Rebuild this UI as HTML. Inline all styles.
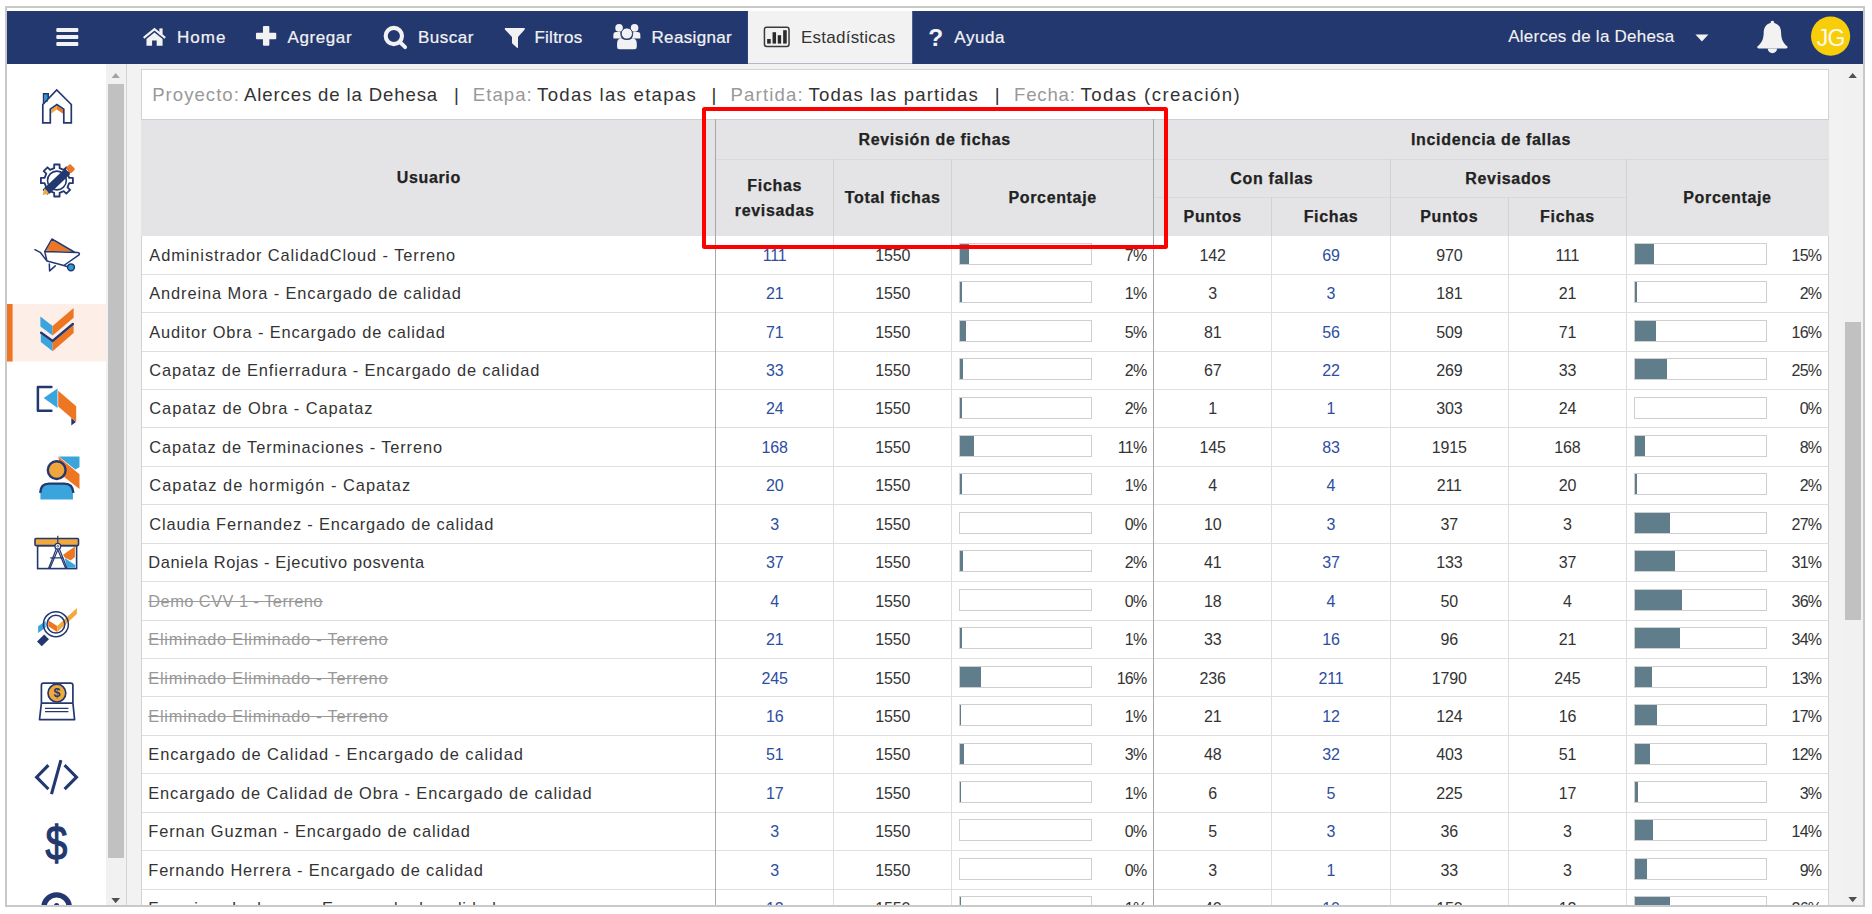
<!DOCTYPE html><html lang="es"><head><meta charset="utf-8"><title>Estadísticas</title><style>*{box-sizing:border-box;margin:0;padding:0}
html,body{width:1872px;height:914px;overflow:hidden;background:#fff}
body{position:relative;font-family:"Liberation Sans",sans-serif;color:#333;font-size:16px}
div,svg{position:absolute}
.frame{left:5px;top:6px;width:1860px;height:901px;border:2px solid #c9c9c9;background:#fff;z-index:0}
.frame2{left:5px;top:6px;width:1860px;height:901px;border:2px solid #c9c9c9;z-index:50;pointer-events:none}
.white-b{left:0;top:907px;width:1872px;height:7px;background:#fff;z-index:49}
.nav{left:7px;top:11px;width:1856px;height:52.7px;background:#243870;z-index:5;color:#fff}
.nav .it{top:0;height:52.7px;line-height:53.6px;font-size:17px;white-space:nowrap;color:#f2f2f2;-webkit-text-stroke:.22px #f2f2f2}
.nav svg{overflow:visible}
.side{left:7px;top:63.7px;width:99px;height:842px;background:#fff;z-index:3;overflow:hidden}


.sbL{left:106px;top:63.7px;width:20px;height:842px;background:#f1f1f1;z-index:3}
.sbL .thumb{left:2px;top:20.5px;width:16px;height:773.5px;background:#c1c1c1}
.sbL svg,.sbR svg{width:9.4px;height:5.2px}
.sline{left:126px;top:63.7px;width:1.2px;height:842px;background:#d4d4d4;z-index:3}
.main{left:0;top:0;width:1872px;height:906px;z-index:2;overflow:hidden}
.main:before{content:"";position:absolute;left:127px;top:63.7px;width:1736px;height:842px;background:#f2f2f2}
.panel{left:141.4px;top:68.6px;width:1687.5px;height:850px;background:#fff;border:1.2px solid #d3d3d3}
.filt{left:152px;top:80.5px;height:28px;width:1200px;line-height:28px;font-size:18.6px;white-space:nowrap;color:#333}
.filt span{position:absolute;top:0;white-space:nowrap}
.filt .g{color:#999}
.thead{left:141.4px;top:119.3px;width:1687.5px;height:116.4px;background:#e4e4e6}
.hl{height:1px;background:#d9d9db}
.vl{width:1px;background:#d2d2d4}
.rl{height:1px;background:#dfdfdf}
.bvl{width:1px;background:#dedede}
.dvl{width:1.2px;background:#a8a8a8}
.th{padding-top:2.4px;-webkit-text-stroke:.25px #222;display:flex;align-items:center;justify-content:center;text-align:center;font-weight:700;font-size:16px;line-height:24.4px;color:#222;letter-spacing:.66px}
.row{left:0;width:1872px;height:38.44px}
.c{top:0;height:38.44px;line-height:38.8px;white-space:nowrap;font-size:16.4px;color:#333}
.name{letter-spacing:.91px;font-size:16.4px}
.del{color:#999;text-decoration:line-through}
.ctr{text-align:center;letter-spacing:-.15px;font-size:16px;line-height:39.3px}
.pct{text-align:right;letter-spacing:-.7px;font-size:16px;line-height:39.3px}
.lk{color:#2e4da0}
.bar{width:133.1px;height:22px;border:1.1px solid #cfcfcf;background:#fff}
.bar i{position:absolute;left:0;top:0;height:100%;background:#607d8b}
.red{left:701.6px;top:107.4px;width:466px;height:141.6px;border:4px solid #fe0000;border-radius:2.5px;z-index:20}
.sbR{left:1843px;top:63.7px;width:20px;height:842px;z-index:3;background:#f1f1f1}
.sbR .thumb{left:2px;top:258.3px;width:16px;height:298.2px;background:#c1c1c1}
.sbR .up{left:5.3px;top:8.9px}
.sbR .dn{left:5.2px;top:833.1px}
.sbL .up{left:5.2px;top:8.9px}
.sbL .dn{left:5.2px;top:834.3px}
.nav .q{left:921.2px;top:0;height:52.7px;line-height:53.8px;font-size:24.5px;font-weight:700;color:#f2f2f2}
.nav .av{left:1804.2px;top:5.6px;width:39.2px;height:39.2px;line-height:43.8px;text-align:center;color:#fff;font-size:23px;letter-spacing:-.6px;opacity:.93}
.fl{left:141.4px;top:119px;width:1687.5px;height:1px;background:#cfcfcf}
</style></head><body>
<div class="frame"></div>
<div class="nav">
<svg style="left:0;top:0;width:1856px;height:52.7px" viewBox="7 11 1856 52.7">
<g fill="#f2f2f2">
<rect x="56.1" y="28" width="22" height="4" rx="1"/><rect x="56.1" y="35" width="22" height="4" rx="1"/><rect x="56.1" y="42" width="22" height="4" rx="1"/>
<!-- home -->
<path d="M143.5 37.9L154.3 29.2L165 37.9" fill="none" stroke="#f2f2f2" stroke-width="2.1" stroke-linejoin="miter"/>
<path d="M146.3 38.9L154.3 32.4L162.4 38.9V45.8H156.5V40.6H151.9V45.8H146.3Z"/>
<rect x="159.2" y="28.4" width="3.2" height="6"/>
<!-- plus -->
<rect x="255.8" y="32.8" width="20.3" height="6.4" rx="1"/><rect x="262.8" y="26.1" width="6.4" height="19.7" rx="1"/>
<!-- search -->
<circle cx="393.7" cy="36" r="8.15" fill="none" stroke="#f2f2f2" stroke-width="4.1"/>
<path d="M400.2 42.5L405 47.1" fill="none" stroke="#f2f2f2" stroke-width="3.9" stroke-linecap="round"/>
<!-- filter -->
<path d="M505.2 28.1H524.2Q525.2 28.6 524.4 29.8L517.9 36.9V47.4Q517.5 48.4 516.6 47.6L512.2 43.6Q511.9 43.3 511.9 42.8V36.9L505 29.8Q504.2 28.6 505.2 28.1Z"/>
<!-- users -->
<circle cx="619" cy="27.9" r="3.8"/><circle cx="634.5" cy="27.9" r="3.8"/>
<path d="M613.3 38.6V35.2Q613.3 32 616 32H620.2Q620 35.8 621.8 38.6Z"/>
<path d="M640.3 38.6V35.2Q640.3 32 637.6 32H633.2Q633.4 35.8 631.6 38.6Z"/>
<circle cx="626.8" cy="33.5" r="5.6" stroke="#243870" stroke-width="0.9"/>
<path d="M617 47V43.5Q617 38.4 621.2 38.2Q626.8 42 632.4 38.2Q636.7 38.4 636.7 43.5V47Q636.7 49.2 634.4 49.2H619.3Q617 49.2 617 47Z"/>
</g>
<!-- chart -->
<rect x="747.9" y="11" width="164.3" height="52.7" fill="#f2f2f2"/>
<rect x="764.4" y="27.2" width="24.6" height="19.2" rx="2.2" fill="none" stroke="#3a3a3a" stroke-width="1.5"/>
<g fill="#2a2a2a"><rect x="767.1" y="39" width="3.6" height="4.6"/><rect x="772.5" y="32.2" width="3.5" height="11.4"/><rect x="777.7" y="35.2" width="3.4" height="8.4"/><rect x="783.1" y="30.2" width="3.6" height="13.4"/></g>
<!-- caret -->
<path d="M1695.6 34.4H1708.6L1702.1 41.4Z" fill="#f2f2f2"/>
<!-- bell -->
<path d="M1772.6 20.7C1773.8 20.7 1774.5 21.6 1774.4 22.9C1779.2 24 1781.2 27.6 1781.3 32.6C1781.4 39.5 1783.3 43 1787.6 46.6C1788 47.6 1787.6 48.5 1786.4 48.5H1758.8C1757.6 48.5 1757.2 47.6 1757.6 46.6C1761.9 43 1763.8 39.5 1763.9 32.6C1764 27.6 1766 24 1770.8 22.9C1770.7 21.6 1771.4 20.7 1772.6 20.7Z" fill="#f2f2f2"/>
<path d="M1767.9 48.4A4.7 4.8 0 0 0 1777.3 48.4Z" fill="#f2f2f2"/>
<circle cx="1830.8" cy="36.2" r="19.6" fill="#f8cd0a"/>
</svg>
<div class="it" style="left:170px;letter-spacing:1px">Home</div>
<div class="it" style="left:280.6px;letter-spacing:.58px">Agregar</div>
<div class="it" style="left:410.9px;letter-spacing:.5px">Buscar</div>
<div class="it" style="left:527.5px;letter-spacing:.23px">Filtros</div>
<div class="it" style="left:644.5px;letter-spacing:.34px">Reasignar</div>
<div class="it" style="left:794px;color:#333;letter-spacing:.24px;-webkit-text-stroke:0">Estadísticas</div>
<div class="it" style="left:947.3px;letter-spacing:.55px">Ayuda</div>
<div class="it" style="left:1501.3px;top:-1px;letter-spacing:.23px;-webkit-text-stroke:.1px #f2f2f2">Alerces de la Dehesa</div>
<div class="q">?</div>
<div class="av">JG</div>
</div>

<div class="side"><svg class="icons" style="left:0;top:0;width:99px;height:842.3px" viewBox="7 63.7 99 842.3">
<rect x="7" y="303.7" width="99" height="57.5" fill="#fdefe7"/><rect x="7" y="303.7" width="5.6" height="57.5" fill="#ee7623"/>
<rect x="44.3" y="93.6" width="3.6" height="8" fill="#2e9bd6"/>
<path d="M51.2 109.2L56.9 105.3V109.2L51.2 113.2Z" fill="#f2a93b"/><path d="M56.9 105.3L63.1 109.2V113.4L56.9 109.2Z" fill="#ee7623"/>
<path d="M43.6 103.4V93.4H48.2V98.6" fill="none" stroke="#243870" stroke-width="1.6"/>
<path d="M42.8 122.6V104.2L56.7 89.7L71.3 104.2V122.6H63.8V108.8L56.9 104.3L50.3 108.8V122.6Z" fill="none" stroke="#243870" stroke-width="1.7" stroke-linejoin="miter"/>
<path d="M54.2 167.9 L54.2 164.2 L59.6 164.2 L59.6 167.9 L63.7 169.6 L66.3 167.0 L70.1 170.8 L67.5 173.4 L69.2 177.5 L72.9 177.5 L72.9 182.9 L69.2 182.9 L67.5 187.0 L70.1 189.6 L66.3 193.4 L63.7 190.8 L59.6 192.5 L59.6 196.2 L54.2 196.2 L54.2 192.5 L50.1 190.8 L47.5 193.4 L43.7 189.6 L46.3 187.0 L44.6 182.9 L40.9 182.9 L40.9 177.5 L44.6 177.5 L46.3 173.4 L43.7 170.8 L47.5 167.0 L50.1 169.6Z" fill="#fff" stroke="#243870" stroke-width="1.8" stroke-linejoin="round"/>
<circle cx="56.9" cy="180.2" r="9.4" fill="#fff" stroke="#243870" stroke-width="1.6"/>
<g transform="translate(42.6 194.7) rotate(-43.4)"><path d="M0 0L6 -3.7V3.7Z" fill="#f2a93b"/><rect x="6" y="-3.8" width="28.6" height="7.6" fill="#243870"/><rect x="35.3" y="-3.8" width="6.2" height="7.6" rx="1.6" fill="#ee7623"/></g>
<path d="M45.9 250.4L52 239.6L72.6 251.4Z" fill="#ee7623"/>
<path d="M34.9 249.4L40.2 252L47 260.8L63.8 265.2L79 254.6Q80.2 252.6 77.8 252.3L44.7 251.3L47 260.8M44.7 251.3L51.9 238.7L75 252.2M63.8 265.2L67.5 266.4M49.3 263.6L49.6 270.6L55.3 265.6" fill="none" stroke="#243870" stroke-width="1.5" stroke-linejoin="round" stroke-linecap="round"/>
<circle cx="71" cy="267" r="3.4" fill="#2e9bd6" stroke="#243870" stroke-width="1.5"/>
<path d="M40.4 316.1L52.6 325.6V335.1L40.4 326.3Z" fill="#3aa5dd"/><path d="M52.6 325.6L73.6 307.6V317.4L52.6 335.1Z" fill="#ee7623"/>
<path d="M40.8 333.8L52.6 342V350.9L40.8 341.7Z" fill="#3aa5dd"/><path d="M52.6 342L73.6 325V332.8L52.6 350.9Z" fill="#ee7623"/>
<path d="M41.1 332.4L52.6 340.6L72.9 323.7" fill="none" stroke="#243870" stroke-width="2.4" stroke-linecap="round"/>
<path d="M51.4 386.8H37.9V410.5H51.4" fill="none" stroke="#243870" stroke-width="2.5" stroke-linecap="round" stroke-linejoin="round"/>
<path d="M43.7 397.7L57.5 388.1V407.8Z" fill="#3aa5dd"/><path d="M58.2 390.4L76.2 405.9V421.6L58.2 406.2Z" fill="#ee7623"/><path d="M71.3 417.6L75.9 421.6L71.3 425.3Z" fill="#243870"/>
<path d="M58.8 456.2H79.5V467L75.2 469.3Z" fill="#3aa5dd"/><path d="M58.2 456.2L79.5 473.9V488.7L62 475Z" fill="#ee7623"/>
<circle cx="56.7" cy="469.8" r="8.9" fill="#f0a63c" stroke="#243870" stroke-width="2.4"/>
<path d="M40.4 499.2V491Q41 483.2 49 483.2H64.4Q72.4 483.2 72.9 491V499.2Z" fill="#3aa5dd"/>
<path d="M40.2 492.6Q40.6 483.3 49 483.3H64.4Q72.8 483.3 73.4 492.6" fill="none" stroke="#243870" stroke-width="2.4"/>
<rect x="37.6" y="545.3" width="39" height="23" fill="#fff" stroke="#243870" stroke-width="1.6"/>
<path d="M63.1 554.5L74.9 546.3V556.8L70.6 560.1L64.7 557.1Z" fill="#ee7623"/><path d="M64.7 557.8L75.2 564.7V567.4H67Z" fill="#3aa5dd"/>
<rect x="35" y="538.2" width="43.5" height="7.1" rx="1" fill="#f2a93b" stroke="#243870" stroke-width="1.6"/>
<path d="M57.8 535.5V543M56.4 548.2L48.6 568M50 568L57.8 549.5L65.6 568M67 568L59.2 548.2M50.3 557.5H63.6" fill="none" stroke="#243870" stroke-width="1.2"/>
<circle cx="57.8" cy="546" r="2.9" fill="#fff" stroke="#243870" stroke-width="1.3"/><circle cx="57.8" cy="546" r="0.9" fill="none" stroke="#243870" stroke-width=".7"/>
<path d="M38.1 625.9L45.7 620.6V627.2L38.1 632.8Z" fill="#3aa5dd"/>
<path d="M48.3 620L57.2 625.6V631.8L48.3 625.9Z" fill="#ee7623"/><path d="M57.2 625.6L76.9 607.8V613.7L57.2 631.8Z" fill="#f2a93b"/>
<circle cx="55.9" cy="623.9" r="12.5" fill="none" stroke="#243870" stroke-width="1.5"/><circle cx="55.9" cy="623.9" r="8.9" fill="none" stroke="#243870" stroke-width="1.5"/>
<path d="M46.6 636.6L39.4 643.6" stroke="#243870" stroke-width="6.8" fill="none" stroke-linecap="butt"/>
<path d="M41.4 702.9V685Q41.4 682.8 43.6 682.8H70.7Q72.9 682.8 72.9 685V702.9L74.6 719.3H39.5L41.4 702.9H72.9" fill="#fff" stroke="#243870" stroke-width="1.7" stroke-linejoin="round"/>
<circle cx="56.9" cy="692.8" r="8.9" fill="#f2a93b" stroke="#243870" stroke-width="1.7"/>
<path d="M45 708.1H68.4M45 711.4H68.4" stroke="#243870" stroke-width="1.3"/>
<text x="56.9" y="697.2" text-anchor="middle" font-family="Liberation Sans, sans-serif" font-size="12.5" font-weight="700" fill="#243870">$</text>
<path d="M47.3 766L36.6 776.9L47.3 787.7M60.5 761.4L51.9 792.3M65.7 766L76.5 776.9L65.7 787.7" fill="none" stroke="#243870" stroke-width="3.1" stroke-linecap="square" stroke-linejoin="miter"/>
<text x="56.4" y="859.8" text-anchor="middle" font-family="Liberation Sans, sans-serif" font-size="47.8" font-weight="400" fill="#243870" stroke="#243870" stroke-width="1.3" transform="translate(56.4 0) scale(.82 1) translate(-56.4 0)">$</text>
<circle cx="56.6" cy="907.4" r="12.8" fill="none" stroke="#243870" stroke-width="5.4"/><circle cx="56.6" cy="905.3" r="2.6" fill="#243870"/>
</svg></div>
<div class="sbL"><div class="thumb"></div><svg class="up" viewBox="0 0 10 6"><path d="M0 6L5 0L10 6Z" fill="#a3a3a3"/></svg><svg class="dn" viewBox="0 0 10 6"><path d="M0 0L5 6L10 0Z" fill="#505050"/></svg></div>
<div class="sline"></div>

<div class="main">
<div class="panel"></div>
<div class="filt">
<span class="g" style="left:0.20px;letter-spacing:1.013px">Proyecto:</span>
<span class="d" style="left:92.10px;letter-spacing:0.858px">Alerces de la Dehesa</span>
<span class="d" style="left:302.00px;letter-spacing:0px">|</span>
<span class="g" style="left:320.80px;letter-spacing:1.04px">Etapa:</span>
<span class="d" style="left:385.10px;letter-spacing:1.273px">Todas las etapas</span>
<span class="d" style="left:559.60px;letter-spacing:0px">|</span>
<span class="g" style="left:578.50px;letter-spacing:1.157px">Partida:</span>
<span class="d" style="left:656.50px;letter-spacing:1.147px">Todas las partidas</span>
<span class="d" style="left:842.80px;letter-spacing:0px">|</span>
<span class="g" style="left:862.00px;letter-spacing:0.82px">Fecha:</span>
<span class="d" style="left:928.60px;letter-spacing:1.447px">Todas (creación)</span>
</div>
<div class="thead"></div><div class="fl"></div>
<div class="hl" style="left:715.7px;top:158.7px;width:1112.7px"></div>
<div class="hl" style="left:1153.6px;top:196.7px;width:472.9px"></div>
<div class="vl" style="left:833.2px;top:159.2px;height:76.5px"></div>
<div class="vl" style="left:951.2px;top:159.2px;height:76.5px"></div>
<div class="vl" style="left:1271.3px;top:197.2px;height:38.5px"></div>
<div class="vl" style="left:1389.7px;top:159.2px;height:76.5px"></div>
<div class="vl" style="left:1507.9px;top:197.2px;height:38.5px"></div>
<div class="vl" style="left:1626.0px;top:159.2px;height:76.5px"></div>
<div class="th" style="left:141.9px;width:573.8px;top:119.3px;height:116.4px;"><span>Usuario</span></div>
<div class="th" style="left:715.7px;width:437.9px;top:119.3px;height:39.9px;"><span>Revisión de fichas</span></div>
<div class="th" style="left:1153.6px;width:674.8px;top:119.3px;height:39.9px;"><span>Incidencia de fallas</span></div>
<div class="th" style="left:715.7px;width:118.0px;top:159.2px;height:76.5px;"><span>Fichas<br>revisadas</span></div>
<div class="th" style="left:833.7px;width:118.0px;top:159.2px;height:76.5px;"><span>Total fichas</span></div>
<div class="th" style="left:951.7px;width:201.9px;top:159.2px;height:76.5px;"><span>Porcentaje</span></div>
<div class="th" style="left:1153.6px;width:236.6px;top:159.2px;height:38.0px;"><span>Con fallas</span></div>
<div class="th" style="left:1390.2px;width:236.3px;top:159.2px;height:38.0px;"><span>Revisados</span></div>
<div class="th" style="left:1153.6px;width:118.2px;top:197.2px;height:38.5px;"><span>Puntos</span></div>
<div class="th" style="left:1271.8px;width:118.4px;top:197.2px;height:38.5px;"><span>Fichas</span></div>
<div class="th" style="left:1390.2px;width:118.2px;top:197.2px;height:38.5px;"><span>Puntos</span></div>
<div class="th" style="left:1508.4px;width:118.1px;top:197.2px;height:38.5px;"><span>Fichas</span></div>
<div class="th" style="left:1626.5px;width:201.9px;top:159.2px;height:76.5px;"><span>Porcentaje</span></div>
<div class="row" style="top:235.70px">
<div class="c name" style="left:149.3px;letter-spacing:0.914px">Administrador CalidadCloud - Terreno</div>
<div class="c ctr lk" style="left:715.7px;width:118.0px">111</div>
<div class="c ctr" style="left:833.7px;width:118.0px">1550</div>
<div class="c pct" style="left:951.7px;width:194.9px">7%</div>
<div class="c ctr" style="left:1153.6px;width:118.2px">142</div>
<div class="c ctr lk" style="left:1271.8px;width:118.4px">69</div>
<div class="c ctr" style="left:1390.2px;width:118.2px">970</div>
<div class="c ctr" style="left:1508.4px;width:118.1px">111</div>
<div class="c pct" style="left:1626.5px;width:194.9px">15%</div>
</div>
<div class="bar" style="left:958.9px;top:242.80px"><i style="width:9.4px"></i></div>
<div class="bar" style="left:1633.7px;top:242.80px"><i style="width:19.2px"></i></div>
<div class="row" style="top:274.14px">
<div class="c name" style="left:149.3px;letter-spacing:0.883px">Andreina Mora - Encargado de calidad</div>
<div class="c ctr lk" style="left:715.7px;width:118.0px">21</div>
<div class="c ctr" style="left:833.7px;width:118.0px">1550</div>
<div class="c pct" style="left:951.7px;width:194.9px">1%</div>
<div class="c ctr" style="left:1153.6px;width:118.2px">3</div>
<div class="c ctr lk" style="left:1271.8px;width:118.4px">3</div>
<div class="c ctr" style="left:1390.2px;width:118.2px">181</div>
<div class="c ctr" style="left:1508.4px;width:118.1px">21</div>
<div class="c pct" style="left:1626.5px;width:194.9px">2%</div>
</div>
<div class="bar" style="left:958.9px;top:281.24px"><i style="width:1.8px"></i></div>
<div class="bar" style="left:1633.7px;top:281.24px"><i style="width:2.2px"></i></div>
<div class="rl" style="left:141.9px;top:273.64px;width:1686.5px"></div>
<div class="row" style="top:312.58px">
<div class="c name" style="left:149.3px;letter-spacing:0.865px">Auditor Obra - Encargado de calidad</div>
<div class="c ctr lk" style="left:715.7px;width:118.0px">71</div>
<div class="c ctr" style="left:833.7px;width:118.0px">1550</div>
<div class="c pct" style="left:951.7px;width:194.9px">5%</div>
<div class="c ctr" style="left:1153.6px;width:118.2px">81</div>
<div class="c ctr lk" style="left:1271.8px;width:118.4px">56</div>
<div class="c ctr" style="left:1390.2px;width:118.2px">509</div>
<div class="c ctr" style="left:1508.4px;width:118.1px">71</div>
<div class="c pct" style="left:1626.5px;width:194.9px">16%</div>
</div>
<div class="bar" style="left:958.9px;top:319.68px"><i style="width:6.0px"></i></div>
<div class="bar" style="left:1633.7px;top:319.68px"><i style="width:20.9px"></i></div>
<div class="rl" style="left:141.9px;top:312.08px;width:1686.5px"></div>
<div class="row" style="top:351.02px">
<div class="c name" style="left:149.3px;letter-spacing:0.851px">Capataz de Enfierradura - Encargado de calidad</div>
<div class="c ctr lk" style="left:715.7px;width:118.0px">33</div>
<div class="c ctr" style="left:833.7px;width:118.0px">1550</div>
<div class="c pct" style="left:951.7px;width:194.9px">2%</div>
<div class="c ctr" style="left:1153.6px;width:118.2px">67</div>
<div class="c ctr lk" style="left:1271.8px;width:118.4px">22</div>
<div class="c ctr" style="left:1390.2px;width:118.2px">269</div>
<div class="c ctr" style="left:1508.4px;width:118.1px">33</div>
<div class="c pct" style="left:1626.5px;width:194.9px">25%</div>
</div>
<div class="bar" style="left:958.9px;top:358.12px"><i style="width:2.8px"></i></div>
<div class="bar" style="left:1633.7px;top:358.12px"><i style="width:32.7px"></i></div>
<div class="rl" style="left:141.9px;top:350.52px;width:1686.5px"></div>
<div class="row" style="top:389.46px">
<div class="c name" style="left:149.3px;letter-spacing:0.946px">Capataz de Obra - Capataz</div>
<div class="c ctr lk" style="left:715.7px;width:118.0px">24</div>
<div class="c ctr" style="left:833.7px;width:118.0px">1550</div>
<div class="c pct" style="left:951.7px;width:194.9px">2%</div>
<div class="c ctr" style="left:1153.6px;width:118.2px">1</div>
<div class="c ctr lk" style="left:1271.8px;width:118.4px">1</div>
<div class="c ctr" style="left:1390.2px;width:118.2px">303</div>
<div class="c ctr" style="left:1508.4px;width:118.1px">24</div>
<div class="c pct" style="left:1626.5px;width:194.9px">0%</div>
</div>
<div class="bar" style="left:958.9px;top:396.56px"><i style="width:2.0px"></i></div>
<div class="bar" style="left:1633.7px;top:396.56px"><i style="width:0.0px"></i></div>
<div class="rl" style="left:141.9px;top:388.96px;width:1686.5px"></div>
<div class="row" style="top:427.90px">
<div class="c name" style="left:149.3px;letter-spacing:0.882px">Capataz de Terminaciones - Terreno</div>
<div class="c ctr lk" style="left:715.7px;width:118.0px">168</div>
<div class="c ctr" style="left:833.7px;width:118.0px">1550</div>
<div class="c pct" style="left:951.7px;width:194.9px">11%</div>
<div class="c ctr" style="left:1153.6px;width:118.2px">145</div>
<div class="c ctr lk" style="left:1271.8px;width:118.4px">83</div>
<div class="c ctr" style="left:1390.2px;width:118.2px">1915</div>
<div class="c ctr" style="left:1508.4px;width:118.1px">168</div>
<div class="c pct" style="left:1626.5px;width:194.9px">8%</div>
</div>
<div class="bar" style="left:958.9px;top:435.00px"><i style="width:14.2px"></i></div>
<div class="bar" style="left:1633.7px;top:435.00px"><i style="width:9.9px"></i></div>
<div class="rl" style="left:141.9px;top:427.4px;width:1686.5px"></div>
<div class="row" style="top:466.34px">
<div class="c name" style="left:149.3px;letter-spacing:1.018px">Capataz de hormigón - Capataz</div>
<div class="c ctr lk" style="left:715.7px;width:118.0px">20</div>
<div class="c ctr" style="left:833.7px;width:118.0px">1550</div>
<div class="c pct" style="left:951.7px;width:194.9px">1%</div>
<div class="c ctr" style="left:1153.6px;width:118.2px">4</div>
<div class="c ctr lk" style="left:1271.8px;width:118.4px">4</div>
<div class="c ctr" style="left:1390.2px;width:118.2px">211</div>
<div class="c ctr" style="left:1508.4px;width:118.1px">20</div>
<div class="c pct" style="left:1626.5px;width:194.9px">2%</div>
</div>
<div class="bar" style="left:958.9px;top:473.44px"><i style="width:1.7px"></i></div>
<div class="bar" style="left:1633.7px;top:473.44px"><i style="width:2.5px"></i></div>
<div class="rl" style="left:141.9px;top:465.84px;width:1686.5px"></div>
<div class="row" style="top:504.78px">
<div class="c name" style="left:149.3px;letter-spacing:0.833px">Claudia Fernandez - Encargado de calidad</div>
<div class="c ctr lk" style="left:715.7px;width:118.0px">3</div>
<div class="c ctr" style="left:833.7px;width:118.0px">1550</div>
<div class="c pct" style="left:951.7px;width:194.9px">0%</div>
<div class="c ctr" style="left:1153.6px;width:118.2px">10</div>
<div class="c ctr lk" style="left:1271.8px;width:118.4px">3</div>
<div class="c ctr" style="left:1390.2px;width:118.2px">37</div>
<div class="c ctr" style="left:1508.4px;width:118.1px">3</div>
<div class="c pct" style="left:1626.5px;width:194.9px">27%</div>
</div>
<div class="bar" style="left:958.9px;top:511.88px"><i style="width:0.0px"></i></div>
<div class="bar" style="left:1633.7px;top:511.88px"><i style="width:35.4px"></i></div>
<div class="rl" style="left:141.9px;top:504.28px;width:1686.5px"></div>
<div class="row" style="top:543.22px">
<div class="c name" style="left:148.3px;letter-spacing:0.652px">Daniela Rojas - Ejecutivo posventa</div>
<div class="c ctr lk" style="left:715.7px;width:118.0px">37</div>
<div class="c ctr" style="left:833.7px;width:118.0px">1550</div>
<div class="c pct" style="left:951.7px;width:194.9px">2%</div>
<div class="c ctr" style="left:1153.6px;width:118.2px">41</div>
<div class="c ctr lk" style="left:1271.8px;width:118.4px">37</div>
<div class="c ctr" style="left:1390.2px;width:118.2px">133</div>
<div class="c ctr" style="left:1508.4px;width:118.1px">37</div>
<div class="c pct" style="left:1626.5px;width:194.9px">31%</div>
</div>
<div class="bar" style="left:958.9px;top:550.32px"><i style="width:3.1px"></i></div>
<div class="bar" style="left:1633.7px;top:550.32px"><i style="width:40.4px"></i></div>
<div class="rl" style="left:141.9px;top:542.72px;width:1686.5px"></div>
<div class="row" style="top:581.66px">
<div class="c name del" style="left:148.3px;letter-spacing:0.458px">Demo CVV 1 - Terreno</div>
<div class="c ctr lk" style="left:715.7px;width:118.0px">4</div>
<div class="c ctr" style="left:833.7px;width:118.0px">1550</div>
<div class="c pct" style="left:951.7px;width:194.9px">0%</div>
<div class="c ctr" style="left:1153.6px;width:118.2px">18</div>
<div class="c ctr lk" style="left:1271.8px;width:118.4px">4</div>
<div class="c ctr" style="left:1390.2px;width:118.2px">50</div>
<div class="c ctr" style="left:1508.4px;width:118.1px">4</div>
<div class="c pct" style="left:1626.5px;width:194.9px">36%</div>
</div>
<div class="bar" style="left:958.9px;top:588.76px"><i style="width:0.0px"></i></div>
<div class="bar" style="left:1633.7px;top:588.76px"><i style="width:47.2px"></i></div>
<div class="rl" style="left:141.9px;top:581.16px;width:1686.5px"></div>
<div class="row" style="top:620.10px">
<div class="c name del" style="left:148.3px;letter-spacing:0.746px">Eliminado Eliminado - Terreno</div>
<div class="c ctr lk" style="left:715.7px;width:118.0px">21</div>
<div class="c ctr" style="left:833.7px;width:118.0px">1550</div>
<div class="c pct" style="left:951.7px;width:194.9px">1%</div>
<div class="c ctr" style="left:1153.6px;width:118.2px">33</div>
<div class="c ctr lk" style="left:1271.8px;width:118.4px">16</div>
<div class="c ctr" style="left:1390.2px;width:118.2px">96</div>
<div class="c ctr" style="left:1508.4px;width:118.1px">21</div>
<div class="c pct" style="left:1626.5px;width:194.9px">34%</div>
</div>
<div class="bar" style="left:958.9px;top:627.20px"><i style="width:1.8px"></i></div>
<div class="bar" style="left:1633.7px;top:627.20px"><i style="width:45.1px"></i></div>
<div class="rl" style="left:141.9px;top:619.5999999999999px;width:1686.5px"></div>
<div class="row" style="top:658.54px">
<div class="c name del" style="left:148.3px;letter-spacing:0.746px">Eliminado Eliminado - Terreno</div>
<div class="c ctr lk" style="left:715.7px;width:118.0px">245</div>
<div class="c ctr" style="left:833.7px;width:118.0px">1550</div>
<div class="c pct" style="left:951.7px;width:194.9px">16%</div>
<div class="c ctr" style="left:1153.6px;width:118.2px">236</div>
<div class="c ctr lk" style="left:1271.8px;width:118.4px">211</div>
<div class="c ctr" style="left:1390.2px;width:118.2px">1790</div>
<div class="c ctr" style="left:1508.4px;width:118.1px">245</div>
<div class="c pct" style="left:1626.5px;width:194.9px">13%</div>
</div>
<div class="bar" style="left:958.9px;top:665.64px"><i style="width:20.7px"></i></div>
<div class="bar" style="left:1633.7px;top:665.64px"><i style="width:17.3px"></i></div>
<div class="rl" style="left:141.9px;top:658.04px;width:1686.5px"></div>
<div class="row" style="top:696.98px">
<div class="c name del" style="left:148.3px;letter-spacing:0.746px">Eliminado Eliminado - Terreno</div>
<div class="c ctr lk" style="left:715.7px;width:118.0px">16</div>
<div class="c ctr" style="left:833.7px;width:118.0px">1550</div>
<div class="c pct" style="left:951.7px;width:194.9px">1%</div>
<div class="c ctr" style="left:1153.6px;width:118.2px">21</div>
<div class="c ctr lk" style="left:1271.8px;width:118.4px">12</div>
<div class="c ctr" style="left:1390.2px;width:118.2px">124</div>
<div class="c ctr" style="left:1508.4px;width:118.1px">16</div>
<div class="c pct" style="left:1626.5px;width:194.9px">17%</div>
</div>
<div class="bar" style="left:958.9px;top:704.08px"><i style="width:1.4px"></i></div>
<div class="bar" style="left:1633.7px;top:704.08px"><i style="width:22.2px"></i></div>
<div class="rl" style="left:141.9px;top:696.48px;width:1686.5px"></div>
<div class="row" style="top:735.42px">
<div class="c name" style="left:148.3px;letter-spacing:0.933px">Encargado de Calidad - Encargado de calidad</div>
<div class="c ctr lk" style="left:715.7px;width:118.0px">51</div>
<div class="c ctr" style="left:833.7px;width:118.0px">1550</div>
<div class="c pct" style="left:951.7px;width:194.9px">3%</div>
<div class="c ctr" style="left:1153.6px;width:118.2px">48</div>
<div class="c ctr lk" style="left:1271.8px;width:118.4px">32</div>
<div class="c ctr" style="left:1390.2px;width:118.2px">403</div>
<div class="c ctr" style="left:1508.4px;width:118.1px">51</div>
<div class="c pct" style="left:1626.5px;width:194.9px">12%</div>
</div>
<div class="bar" style="left:958.9px;top:742.52px"><i style="width:4.3px"></i></div>
<div class="bar" style="left:1633.7px;top:742.52px"><i style="width:15.6px"></i></div>
<div class="rl" style="left:141.9px;top:734.92px;width:1686.5px"></div>
<div class="row" style="top:773.86px">
<div class="c name" style="left:148.3px;letter-spacing:0.886px">Encargado de Calidad de Obra - Encargado de calidad</div>
<div class="c ctr lk" style="left:715.7px;width:118.0px">17</div>
<div class="c ctr" style="left:833.7px;width:118.0px">1550</div>
<div class="c pct" style="left:951.7px;width:194.9px">1%</div>
<div class="c ctr" style="left:1153.6px;width:118.2px">6</div>
<div class="c ctr lk" style="left:1271.8px;width:118.4px">5</div>
<div class="c ctr" style="left:1390.2px;width:118.2px">225</div>
<div class="c ctr" style="left:1508.4px;width:118.1px">17</div>
<div class="c pct" style="left:1626.5px;width:194.9px">3%</div>
</div>
<div class="bar" style="left:958.9px;top:780.96px"><i style="width:1.4px"></i></div>
<div class="bar" style="left:1633.7px;top:780.96px"><i style="width:3.5px"></i></div>
<div class="rl" style="left:141.9px;top:773.3599999999999px;width:1686.5px"></div>
<div class="row" style="top:812.30px">
<div class="c name" style="left:148.3px;letter-spacing:0.86px">Fernan Guzman - Encargado de calidad</div>
<div class="c ctr lk" style="left:715.7px;width:118.0px">3</div>
<div class="c ctr" style="left:833.7px;width:118.0px">1550</div>
<div class="c pct" style="left:951.7px;width:194.9px">0%</div>
<div class="c ctr" style="left:1153.6px;width:118.2px">5</div>
<div class="c ctr lk" style="left:1271.8px;width:118.4px">3</div>
<div class="c ctr" style="left:1390.2px;width:118.2px">36</div>
<div class="c ctr" style="left:1508.4px;width:118.1px">3</div>
<div class="c pct" style="left:1626.5px;width:194.9px">14%</div>
</div>
<div class="bar" style="left:958.9px;top:819.40px"><i style="width:0.0px"></i></div>
<div class="bar" style="left:1633.7px;top:819.40px"><i style="width:18.2px"></i></div>
<div class="rl" style="left:141.9px;top:811.8px;width:1686.5px"></div>
<div class="row" style="top:850.74px">
<div class="c name" style="left:148.3px;letter-spacing:0.821px">Fernando Herrera - Encargado de calidad</div>
<div class="c ctr lk" style="left:715.7px;width:118.0px">3</div>
<div class="c ctr" style="left:833.7px;width:118.0px">1550</div>
<div class="c pct" style="left:951.7px;width:194.9px">0%</div>
<div class="c ctr" style="left:1153.6px;width:118.2px">3</div>
<div class="c ctr lk" style="left:1271.8px;width:118.4px">1</div>
<div class="c ctr" style="left:1390.2px;width:118.2px">33</div>
<div class="c ctr" style="left:1508.4px;width:118.1px">3</div>
<div class="c pct" style="left:1626.5px;width:194.9px">9%</div>
</div>
<div class="bar" style="left:958.9px;top:857.84px"><i style="width:0.0px"></i></div>
<div class="bar" style="left:1633.7px;top:857.84px"><i style="width:11.9px"></i></div>
<div class="rl" style="left:141.9px;top:850.24px;width:1686.5px"></div>
<div class="row" style="top:889.18px">
<div class="c name" style="left:148.3px;letter-spacing:0.803px">Francisca Ledesma - Encargado de calidad</div>
<div class="c ctr lk" style="left:715.7px;width:118.0px">12</div>
<div class="c ctr" style="left:833.7px;width:118.0px">1550</div>
<div class="c pct" style="left:951.7px;width:194.9px">1%</div>
<div class="c ctr" style="left:1153.6px;width:118.2px">40</div>
<div class="c ctr lk" style="left:1271.8px;width:118.4px">10</div>
<div class="c ctr" style="left:1390.2px;width:118.2px">150</div>
<div class="c ctr" style="left:1508.4px;width:118.1px">12</div>
<div class="c pct" style="left:1626.5px;width:194.9px">26%</div>
</div>
<div class="bar" style="left:958.9px;top:896.28px"><i style="width:1.0px"></i></div>
<div class="bar" style="left:1633.7px;top:896.28px"><i style="width:35.0px"></i></div>
<div class="rl" style="left:141.9px;top:888.6800000000001px;width:1686.5px"></div>
<div class="bvl" style="left:833.2px;top:235.7px;height:670.3px"></div>
<div class="bvl" style="left:951.2px;top:235.7px;height:670.3px"></div>
<div class="bvl" style="left:1271.3px;top:235.7px;height:670.3px"></div>
<div class="bvl" style="left:1389.7px;top:235.7px;height:670.3px"></div>
<div class="bvl" style="left:1507.9px;top:235.7px;height:670.3px"></div>
<div class="bvl" style="left:1626.0px;top:235.7px;height:670.3px"></div>
<div class="dvl" style="left:715.2px;top:119.3px;height:786.7px"></div>
<div class="dvl" style="left:1153.1px;top:119.3px;height:786.7px"></div>
</div>
<div class="red"></div>
<div class="sbR"><div class="thumb"></div><svg class="up" viewBox="0 0 10 6"><path d="M0 6L5 0L10 6Z" fill="#505050"/></svg><svg class="dn" viewBox="0 0 10 6"><path d="M0 0L5 6L10 0Z" fill="#505050"/></svg></div>
<div class="white-b"></div><div class="frame2"></div>
</body></html>
